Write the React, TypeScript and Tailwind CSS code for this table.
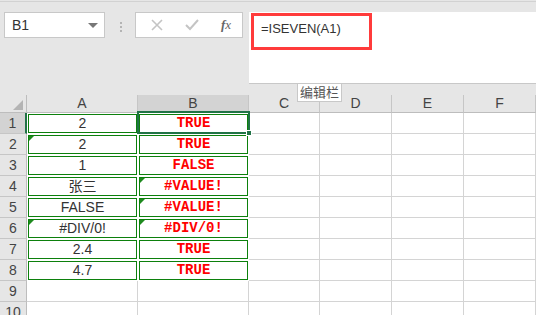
const font = { fontFamily: '"Liberation Sans", "Noto Sans CJK SC", sans-serif' };

const rows: [string, string, boolean, boolean][] = [
  ["2", "TRUE", false, false],
  ["2", "TRUE", true, false],
  ["1", "FALSE", false, false],
  ["张三", "#VALUE!", false, true],
  ["FALSE", "#VALUE!", false, true],
  ["#DIV/0!", "#DIV/0!", true, true],
  ["2.4", "TRUE", false, false],
  ["4.7", "TRUE", false, false],
];

const cols = ["A", "B", "C", "D", "E", "F"];

function Flag() {
  return (
    <span className="absolute left-[2px] top-[2px] w-0 h-0 border-t-[5px] border-t-[#1e8a1e] border-r-[5px] border-r-transparent" />
  );
}

export default function App() {
  return (
    <div className="relative w-[536px] h-[315px] overflow-hidden bg-[#e6e6e6] text-[#333]" style={font}>
      {/* toolbar */}
      <div className="h-[94px] border-t border-[#d2d2d2] mt-[1px] pt-[10px] flex items-start">
        <div className="ml-[4px] w-[101px] h-[26px] bg-white border border-[#c8c8c8] flex items-center justify-between pl-[7px] pr-[6px] text-[14px]">
          <span>B1</span>
          <span className="w-0 h-0 border-l-[5px] border-r-[5px] border-t-[5px] border-l-transparent border-r-transparent border-t-[#777]" />
        </div>
        <div className="ml-[15px] mt-[10px] flex flex-col gap-[2px]">
          <span className="w-[2px] h-[2px] bg-[#b4b4b4]" />
          <span className="w-[2px] h-[2px] bg-[#b4b4b4]" />
          <span className="w-[2px] h-[2px] bg-[#b4b4b4]" />
        </div>
        <div className="ml-[13px] w-[108px] h-[26px] bg-white border border-[#c8c8c8] flex items-center justify-around pl-[4px] pr-[0px]">
          <svg width="12" height="12" viewBox="0 0 12 12">
            <path d="M1 1L11 11M11 1L1 11" stroke="#c4c4c4" strokeWidth="1.6" />
          </svg>
          <svg width="14" height="12" viewBox="0 0 14 12">
            <path d="M1 6L5 10L13 1" stroke="#c4c4c4" strokeWidth="2" fill="none" />
          </svg>
          <span className="text-[13px] italic text-[#666]" style={{ fontFamily: '"Liberation Serif", serif' }}>
            <i className="font-semibold">f</i>x
          </span>
        </div>
        <div className="ml-[6px] flex-1 h-[72px] bg-white border-b border-[#c8c8c8] pl-[2px] pt-[1px]">
          <div className="w-[121px] h-[37px] border-[3px] border-[#ff3b3b] pl-[7px] pt-[3px] text-[13px] text-[#333]">
            =ISEVEN(A1)
          </div>
        </div>
      </div>

      {/* sheet */}
      <div className="grid grid-cols-[27px_111px_111px_71px_72px_72px_72px] grid-rows-[18px_repeat(10,21px)] bg-white">
        <div className="bg-[#e6e6e6] border-r border-b border-[#bdbdbd] flex items-end justify-end pr-[3px] pb-[2px]">
          <span className="w-0 h-0 border-b-[10px] border-l-[10px] border-b-[#b4b4b4] border-l-transparent" />
        </div>
        {cols.map((c) => (
          <div
            key={c}
            className={`flex items-center justify-center text-[14px] text-[#444] border-r border-[#c6c6c6] ${
              c === "B" ? "bg-[#d3d3d3] border-b-2 border-b-[#217346]" : "bg-[#e6e6e6] border-b border-b-[#bdbdbd]"
            }`}
          >
            {c}
          </div>
        ))}

        {Array.from({ length: 10 }).map((_, i) => {
          const r = rows[i];
          return [
            <div
              key={`h${i}`}
              className={`flex items-center justify-center text-[14px] text-[#444] border-b border-[#c6c6c6] ${
                i === 0 ? "bg-[#d3d3d3] border-r-2 border-r-[#217346]" : "bg-[#e6e6e6] border-r border-r-[#bdbdbd]"
              }`}
            >
              {i + 1}
            </div>,
            r ? (
              <div key={`a${i}`} className="relative p-[1px]">
                <div className="h-full border border-[#0c800c] flex items-center justify-center text-[14px] text-[#333]">
                  {r[0]}
                </div>
                {r[2] && <Flag />}
              </div>
            ) : (
              <div key={`a${i}`} className="border-r border-b border-[#d4d4d4]" />
            ),
            r ? (
              <div key={`b${i}`} className="relative p-[1px]">
                <div
                  className="h-full border border-[#0c800c] flex items-center justify-center text-[14px] font-bold text-[#ff0000]"
                  style={{ fontFamily: '"Liberation Mono", monospace' }}
                >
                  {r[1]}
                </div>
                {r[3] && <Flag />}
              </div>
            ) : (
              <div key={`b${i}`} className="border-r border-b border-[#d4d4d4]" />
            ),
            ...[0, 1, 2, 3].map((k) => (
              <div key={`c${i}-${k}`} className="border-r border-b border-[#d4d4d4]" />
            )),
          ];
        })}
      </div>

      {/* active cell */}
      <div className="absolute left-[137px] top-[111px] w-[113px] h-[23px] border-2 border-[#217346]" />
      <div className="absolute left-[246px] top-[130px] w-[6px] h-[6px] bg-[#217346] border border-white" />

      {/* tooltip */}
      <div className="absolute left-[297px] top-[83px] px-[2px] h-[19px] bg-white border border-[#c8c8c8] text-[13px] leading-[17px] text-[#555]">
        编辑栏
      </div>
    </div>
  );
}
